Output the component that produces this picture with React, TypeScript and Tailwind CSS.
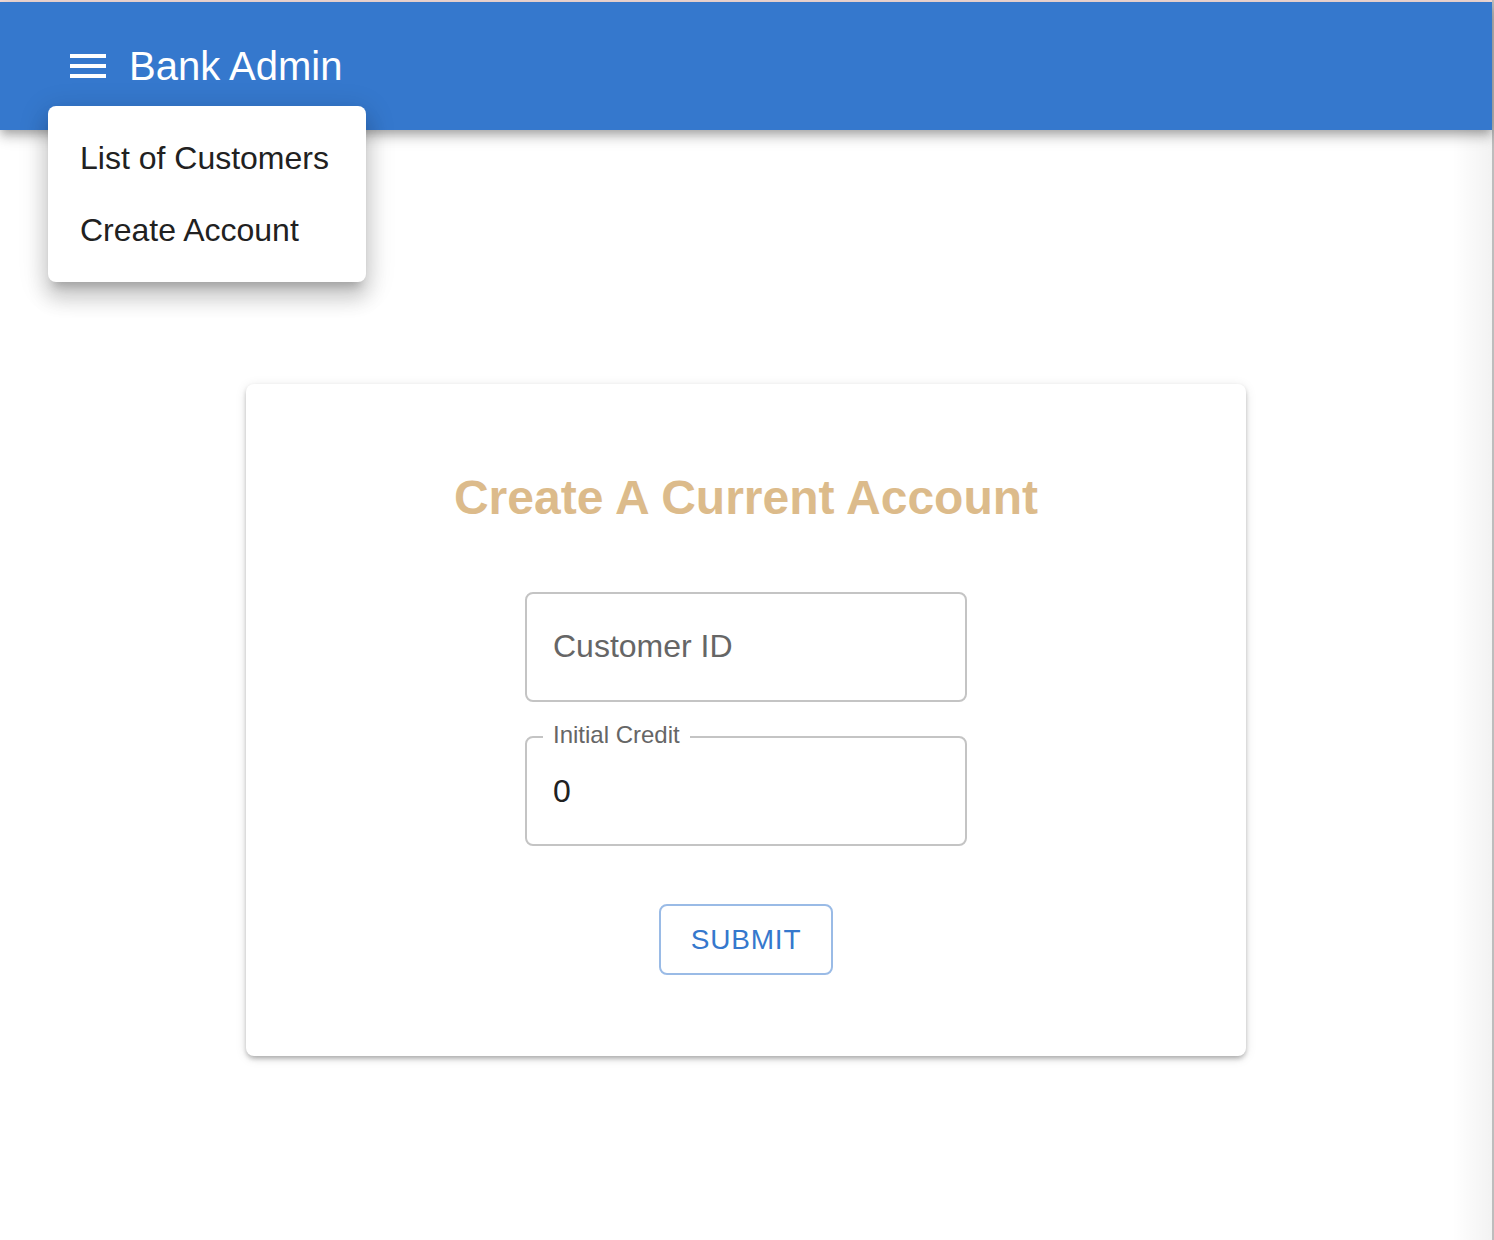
import React from 'react';

// Hamburger glyph, same geometry as the Material "Menu" icon
function MenuIcon() {
  return (
    <svg width="48" height="48" viewBox="0 0 24 24" fill="white" aria-hidden>
      <path d="M3 18h18v-2H3v2zm0-5h18v-2H3v2zm0-7v2h18V6H3z" />
    </svg>
  );
}

function OutlinedField({ label, value }: { label: string; value?: string }) {
  // no value -> label sits inside as placeholder; with value -> label floats on the border
  return (
    <div className="relative w-[442px] h-[110px] rounded-[8px] border-2 border-[#c4c4c4] flex items-center px-[26px]">
      {value !== undefined ? (
        <>
          <span className="absolute -top-[17px] left-[16px] px-[10px] bg-white text-[24px] leading-[28px] text-[#666666]">
            {label}
          </span>
          <span className="text-[32px] leading-[38px] text-[#212121]">{value}</span>
        </>
      ) : (
        <span className="-mt-[2px] text-[32px] leading-[38px] text-[#666666]">{label}</span>
      )}
    </div>
  );
}

export default function App() {
  return (
    <div className="relative min-h-[1240px] w-full flex bg-white overflow-hidden" style={{ fontFamily: '"Liberation Sans", Arial, Helvetica, sans-serif' }}>
      <div className="flex-1 flex flex-col relative">
        {/* thin strip above the app bar */}
        <div className="h-[2px] bg-[#f3dcd8]" />

        {/* App bar */}
        <header className="relative z-10 h-[128px] bg-[#3578cd] flex items-center pl-[64px] shadow-[0_4px_8px_-2px_rgba(0,0,0,0.2),0_8px_10px_rgba(0,0,0,0.14),0_2px_20px_rgba(0,0,0,0.12)]">
          <MenuIcon />
          <span className="ml-[17px] text-[40px] leading-[48px] text-white">Bank Admin</span>
        </header>

        {/* Open navigation menu */}
        <div className="absolute z-20 top-[106px] left-[48px] w-[318px] py-[16px] bg-white rounded-[8px] shadow-[0_10px_10px_-6px_rgba(0,0,0,0.2),0_16px_20px_2px_rgba(0,0,0,0.14),0_6px_28px_4px_rgba(0,0,0,0.12)]">
          <div className="h-[72px] flex items-center px-[32px] text-[32px] text-[#212121]">List of Customers</div>
          <div className="h-[72px] flex items-center px-[32px] text-[32px] text-[#212121]">Create Account</div>
        </div>

        {/* Form card */}
        <main className="flex justify-center pt-[254px]">
          <div className="w-[1000px] bg-white rounded-[8px] pt-[85px] pb-[81px] flex flex-col items-center shadow-[0_4px_6px_-2px_rgba(0,0,0,0.22),0_2px_4px_rgba(0,0,0,0.12),0_2px_12px_rgba(0,0,0,0.1)]">
            <h1 className="h-[58px] text-[48px] leading-[58px] font-bold text-[#dcbb8b]">Create A Current Account</h1>
            <div className="mt-[65px] flex flex-col gap-[34px]">
              <OutlinedField label="Customer ID" />
              <OutlinedField label="Initial Credit" value="0" />
            </div>
            <button className="mt-[58px] h-[71px] px-[30px] rounded-[8px] border-2 border-[#9abbe6] text-[28px] leading-[49px] tracking-[0.8px] text-[#3578cd] bg-white">
              SUBMIT
            </button>
          </div>
        </main>

        {/* faint shading at the window edge */}
        <div className="pointer-events-none absolute top-[130px] bottom-0 right-0 w-[40px] bg-gradient-to-r from-transparent to-black/[0.05]" />
      </div>
      <div className="w-[2px] bg-[#bdbdbd]" />
    </div>
  );
}
